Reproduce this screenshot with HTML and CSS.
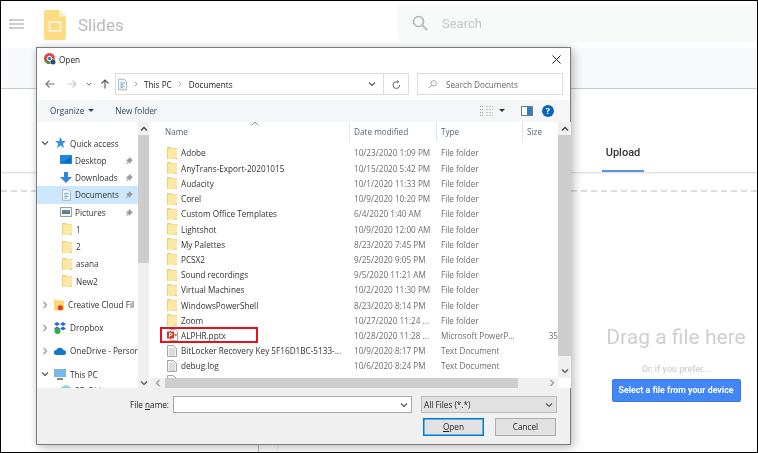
FILE: index.html
```html
<!DOCTYPE html>
<html lang="en">
<head>
<meta charset="utf-8">
<title>Slides - Open</title>
<link rel="stylesheet" href="styles.css">
</head>
<body>
<svg class="defs" width="0" height="0" aria-hidden="true">
  <symbol id="folder" viewBox="0 0 10 12">
    <path d="M0 0h4l1 1h5v11H0z" fill="#f3cf72"/>
    <path d="M1 1.500h9V12H1z" fill="#fce8a6"/>
    <path d="M8 10.500h2V12H8z" fill="#f3cf72"/>
  </symbol>
  <symbol id="doc" viewBox="0 0 10 12">
    <path d="M.5.5h6l3 3v8h-9z" fill="#f4f4f4" stroke="#a8a8a8"/>
    <path d="M2 4h6M2 6h6M2 8h6M2 10h6" stroke="#c4c4c4"/>
  </symbol>
  <symbol id="chev" viewBox="0 0 8 8"><path d="M2.500 1l3 3-3 3" fill="none" stroke="#9a9a9a" stroke-width="1.200"/></symbol>
  <symbol id="chevd" viewBox="0 0 8 8"><path d="M1 2.500l3 3 3-3" fill="none" stroke="#555" stroke-width="1.200"/></symbol>
  <symbol id="chevu" viewBox="0 0 8 8"><path d="M1 5.500l3-3 3 3" fill="none" stroke="#444" stroke-width="1.300"/></symbol>
  <symbol id="pin" viewBox="0 0 8 8"><path d="M4.500 0L8 3.500 6.800 4 5.500 5.400 5 7 1 3l1.600-.6L4 1.200z M2.300 4.800L.5 7.500l2.700-1.800z" fill="#9b9b9b"/></symbol>
  <symbol id="docs" viewBox="0 0 11 14">
    <path d="M.5.5h7l3 3v10H.5z" fill="#f3f5f7" stroke="#9fa6ad"/>
    <path d="M3 5h5M3 7h3M3 9h5M3 11h3" stroke="#4f9fd8"/>
  </symbol>
</svg>

<div class="page">
  <header class="topbar">
    <svg class="hamburger" viewBox="0 0 15 10" width="15" height="10"><path d="M0 1h15M0 5h15M0 9h15" stroke="#bdbdbd" stroke-width="1.300"/></svg>
    <svg class="slides-logo" viewBox="0 0 22 30" width="22" height="30">
      <path d="M2 0h13l7 7v21a2 2 0 0 1-2 2H2a2 2 0 0 1-2-2V2a2 2 0 0 1 2-2z" fill="#fbdc84"/>
      <path d="M15 0l7 7h-7z" fill="#fdeebf"/>
      <path d="M5.500 12h11v9h-11z" fill="none" stroke="#fff2cf" stroke-width="1.800"/>
    </svg>
    <span class="product">Slides</span>
    <div class="searchbox">
      <svg viewBox="0 0 16 16" width="16" height="16"><circle cx="6.500" cy="6.500" r="5" fill="none" stroke="#b5b5b5" stroke-width="1.600"/><path d="M10.200 10.200l5 5" stroke="#b5b5b5" stroke-width="1.800"/></svg>
      <span>Search</span>
    </div>
  </header>
  <div class="band"></div>
  <main class="panel">
    <div class="tabs"><div class="tab">Upload</div></div>
    <div class="dropzone">
      <div class="drag">Drag a file here</div>
      <div class="prefer">Or, if you prefer...</div>
      <div class="select-btn">Select a file from your device</div>
    </div>
  </main>
  <div class="footlines"></div>

  <section class="dialog">
    <div class="titlebar">
      <svg class="chrome" viewBox="0 0 12 12" width="12" height="12">
        <circle cx="5.500" cy="5.500" r="5.500" fill="#d9473c"/>
        <path d="M5.500 5.500L1 8.500A5.500 5.500 0 0 0 6 11z" fill="#3a9b4f"/>
        <path d="M5.500 5.500L11 5.500A5.500 5.500 0 0 1 6 11z" fill="#f2c230"/>
        <circle cx="5.500" cy="5.500" r="2.300" fill="#4a80d8" stroke="#fff"/>
        <circle cx="9" cy="9" r="2.500" fill="#2b4f80"/>
      </svg>
      <span class="title">Open</span>
      <svg class="close" viewBox="0 0 9 9" width="9" height="9"><path d="M.5.500l8 8M8.500.500l-8 8" stroke="#222" stroke-width="1"/></svg>
    </div>

    <div class="navbar">
      <svg class="nav-ico n-back" viewBox="0 0 10 10" width="10" height="10"><path d="M9.500 5H1M4.500 1.500L1 5l3.500 3.500" fill="none" stroke="#777" stroke-width="1.100"/></svg>
      <svg class="nav-ico n-fwd" viewBox="0 0 10 10" width="10" height="10"><path d="M.5 5H9M5.500 1.500L9 5 5.500 8.500" fill="none" stroke="#ccc" stroke-width="1.100"/></svg>
      <svg class="nav-ico n-drop" viewBox="0 0 8 8" width="6" height="6"><use href="#chevd"/></svg>
      <svg class="nav-ico n-up" viewBox="0 0 10 10" width="10" height="10"><path d="M5 9.500V1M1.500 4.500L5 1l3.500 3.500" fill="none" stroke="#555" stroke-width="1.100"/></svg>
      <div class="address">
        <svg class="addr-doc" width="9" height="13"><use href="#docs"/></svg>
        <svg class="crumb-sep" width="6" height="6"><use href="#chev"/></svg>
        <span class="crumb">This PC</span>
        <svg class="crumb-sep" width="6" height="6"><use href="#chev"/></svg>
        <span class="crumb">Documents</span>
        <svg class="addr-drop" width="8" height="8"><use href="#chevd"/></svg>
        <div class="refresh"><svg viewBox="0 0 10 10" width="9" height="9"><path d="M8.500 5.500A3.700 3.700 0 1 1 5 2h2M5.500.5L7.300 2 5.500 3.500" fill="none" stroke="#555" stroke-width="1"/></svg></div>
      </div>
      <div class="search-docs">
        <svg viewBox="0 0 10 10" width="9" height="9"><circle cx="6.300" cy="3.700" r="3" fill="none" stroke="#999"/><path d="M4 6L.8 9.200" stroke="#999"/></svg>
        <span>Search Documents</span>
      </div>
    </div>

    <div class="toolbar">
      <span class="tool">Organize</span><span class="caret"></span>
      <span class="tool newfolder">New folder</span>
      <svg class="views" viewBox="0 0 13 10" width="13" height="10"><path d="M0 .5h4M0 3.500h4M0 6.500h4M0 9.500h4" stroke="#9a9a9a" stroke-dasharray="1 1"/><path d="M6 .5h7M6 3.500h7M6 6.500h7M6 9.500h7" stroke="#c2c2c2" stroke-dasharray="2 1"/></svg>
      <span class="caret dark"></span>
      <svg class="preview" viewBox="0 0 12 10" width="12" height="10"><rect x=".5" y=".5" width="11" height="9" fill="#fff" stroke="#6d7d8c"/><rect x="6" y="1" width="5" height="8" fill="#2d7cc4"/></svg>
      <span class="help">?</span>
    </div>

    <div class="panes">
      <nav class="tree">
        <div class="tree-list">
          <div class="t-row l1"><svg class="arrow" width="8" height="8"><use href="#chevd"/></svg><svg class="ti" viewBox="0 0 12 12" width="12" height="12"><path d="M6.500 0l1.600 4H12L8.800 6.800 10 11 6.500 8.500 3 11l1.200-4.200L1 4h4z" fill="#3b8fe0"/></svg><span>Quick access</span></div>
          <div class="t-row l2"><svg class="ti wide" viewBox="0 0 12 10" width="12" height="10"><rect width="12" height="9" fill="#1f86d8"/><path d="M1 8l10-6v6z" fill="#0d6fc0"/></svg><span>Desktop</span><svg class="pin" width="8" height="8"><use href="#pin"/></svg></div>
          <div class="t-row l2"><svg class="ti wide" viewBox="0 0 12 11" width="12" height="11"><path d="M4 0h4v5h4L6 11 0 5h4z" fill="#2f86dd"/></svg><span>Downloads</span><svg class="pin" width="8" height="8"><use href="#pin"/></svg></div>
          <div class="t-row l2 sel"><svg class="ti wide docs" width="9" height="12"><use href="#docs"/></svg><span>Documents</span><svg class="pin" width="8" height="8"><use href="#pin"/></svg></div>
          <div class="t-row l2"><svg class="ti wide" viewBox="0 0 12 10" width="12" height="10"><rect x=".5" y=".5" width="11" height="9" fill="#f2f4f6" stroke="#99a0a8"/><path d="M2 3h8v2H2z" fill="#5b87b5"/><path d="M2 5h8v2H2z" fill="#6a7c5a"/></svg><span>Pictures</span><svg class="pin" width="8" height="8"><use href="#pin"/></svg></div>
          <div class="t-row l2"><svg class="ti fold" width="10" height="12"><use href="#folder"/></svg><span>1</span></div>
          <div class="t-row l2"><svg class="ti fold" width="10" height="12"><use href="#folder"/></svg><span>2</span></div>
          <div class="t-row l2"><svg class="ti fold" width="10" height="12"><use href="#folder"/></svg><span>asana</span></div>
          <div class="t-row l2"><svg class="ti fold" width="10" height="12"><use href="#folder"/></svg><span>New2</span></div>
          <div class="t-row l1 gap"><svg class="arrow" width="8" height="8"><use href="#chev"/></svg><svg class="ti" viewBox="0 0 11 12" width="10" height="12"><path d="M0 0h3l1 1h7v11H0z" fill="#fbd873"/><circle cx="7" cy="9" r="2.800" fill="#dd3a2a"/></svg><span>Creative Cloud Fil</span></div>
          <div class="t-row l1 gap2"><svg class="arrow" width="8" height="8"><use href="#chev"/></svg><svg class="ti" viewBox="0 0 12 12" width="12" height="12"><path d="M3 0l3 2-3 2-3-2zM9 0l3 2-3 2-3-2zM3 4.500l3 2-3 2-3-2zM9 4.500l3 2-3 2-3-2z" fill="#2a66d8"/><circle cx="3.500" cy="9" r="3" fill="#38a64a"/></svg><span>Dropbox</span></div>
          <div class="t-row l1 gap2"><svg class="arrow" width="8" height="8"><use href="#chev"/></svg><svg class="ti" viewBox="0 0 12 8" width="12" height="8"><path d="M2.500 8a2.500 2.500 0 0 1-.3-5A4 4 0 0 1 9.500 3 2.500 2.500 0 0 1 9.500 8z" fill="#1478c8"/></svg><span>OneDrive - Persor</span></div>
          <div class="t-row l1 gap2"><svg class="arrow" width="8" height="8"><use href="#chevd"/></svg><svg class="ti" viewBox="0 0 12 11" width="12" height="11"><rect width="12" height="8" fill="#75b9e8"/><path d="M3 10h6" stroke="#7a8894" stroke-width="2"/></svg><span>This PC</span></div>
          <div class="t-row l2 tail"><svg class="ti wide" viewBox="0 0 12 10" width="12" height="10"><path d="M6 0l6 3v6H0V3z" fill="#7fd0e8"/></svg><span>3D Objects</span></div>
        </div>
        <div class="vscroll tree-scroll">
          <svg width="8" height="8"><use href="#chevu"/></svg>
          <div class="thumb"></div>
          <svg class="down" width="8" height="8"><use href="#chevd"/></svg>
        </div>
      </nav>

      <div class="files">
        <div class="filearea">
          <div class="columns">
            <div class="head h-name"><svg class="sort" width="8" height="5" viewBox="0 0 8 5"><path d="M.5 4.500L4 1l3.500 3.500" fill="none" stroke="#999"/></svg>Name</div>
            <div class="head">Date modified</div>
            <div class="head">Type</div>
            <div class="head">Size</div>
          </div>
          <div class="rows">
            <div class="row"><svg class="ficon" width="10" height="12"><use href="#folder"/></svg><span class="name">Adobe</span><span class="meta">10/23/2020 1:09 PM</span><span class="meta">File folder</span><span class="meta"></span></div>
            <div class="row"><svg class="ficon" width="10" height="12"><use href="#folder"/></svg><span class="name">AnyTrans-Export-20201015</span><span class="meta">10/15/2020 5:42 PM</span><span class="meta">File folder</span><span class="meta"></span></div>
            <div class="row"><svg class="ficon" width="10" height="12"><use href="#folder"/></svg><span class="name">Audacity</span><span class="meta">10/1/2020 11:33 PM</span><span class="meta">File folder</span><span class="meta"></span></div>
            <div class="row"><svg class="ficon" width="10" height="12"><use href="#folder"/></svg><span class="name">Corel</span><span class="meta">10/9/2020 10:20 PM</span><span class="meta">File folder</span><span class="meta"></span></div>
            <div class="row"><svg class="ficon" width="10" height="12"><use href="#folder"/></svg><span class="name">Custom Office Templates</span><span class="meta">6/4/2020 1:40 AM</span><span class="meta">File folder</span><span class="meta"></span></div>
            <div class="row"><svg class="ficon" width="10" height="12"><use href="#folder"/></svg><span class="name">Lightshot</span><span class="meta">10/9/2020 12:00 AM</span><span class="meta">File folder</span><span class="meta"></span></div>
            <div class="row"><svg class="ficon" width="10" height="12"><use href="#folder"/></svg><span class="name">My Palettes</span><span class="meta">8/23/2020 7:45 PM</span><span class="meta">File folder</span><span class="meta"></span></div>
            <div class="row"><svg class="ficon" width="10" height="12"><use href="#folder"/></svg><span class="name">PCSX2</span><span class="meta">9/25/2020 9:05 PM</span><span class="meta">File folder</span><span class="meta"></span></div>
            <div class="row"><svg class="ficon" width="10" height="12"><use href="#folder"/></svg><span class="name">Sound recordings</span><span class="meta">9/5/2020 11:21 AM</span><span class="meta">File folder</span><span class="meta"></span></div>
            <div class="row"><svg class="ficon" width="10" height="12"><use href="#folder"/></svg><span class="name">Virtual Machines</span><span class="meta">10/2/2020 11:30 PM</span><span class="meta">File folder</span><span class="meta"></span></div>
            <div class="row"><svg class="ficon" width="10" height="12"><use href="#folder"/></svg><span class="name">WindowsPowerShell</span><span class="meta">8/23/2020 8:14 PM</span><span class="meta">File folder</span><span class="meta"></span></div>
            <div class="row"><svg class="ficon" width="10" height="12"><use href="#folder"/></svg><span class="name">Zoom</span><span class="meta">10/27/2020 11:24 ...</span><span class="meta">File folder</span><span class="meta"></span></div>
            <div class="row"><svg class="ficon" viewBox="0 0 11 12" width="11" height="12"><path d="M3.500.5h5l2 2v9h-7z" fill="#fff" stroke="#aaa"/><rect x="0" y="2.500" width="7" height="7" fill="#c8412b"/><path d="M2.500 8V4.200h1.300a1.100 1.100 0 0 1 0 2.300H2.500" fill="none" stroke="#fff"/><circle cx="8.500" cy="6" r="1.400" fill="#e07a5f"/></svg><span class="name">ALPHR.pptx</span><span class="meta">10/28/2020 11:28 ...</span><span class="meta">Microsoft PowerP...</span><span class="meta size">35</span></div>
            <div class="row"><svg class="ficon" width="10" height="12"><use href="#doc"/></svg><span class="name">BitLocker Recovery Key 5F16D1BC-5133-...</span><span class="meta">10/9/2020 8:17 PM</span><span class="meta">Text Document</span><span class="meta"></span></div>
            <div class="row"><svg class="ficon" width="10" height="12"><use href="#doc"/></svg><span class="name">debug.log</span><span class="meta">10/6/2020 8:24 PM</span><span class="meta">Text Document</span><span class="meta"></span></div>
            <div class="row"><svg class="ficon" width="10" height="12"><use href="#doc"/></svg></div>
          </div>
          <div class="redbox"></div>
          <div class="hscroll">
            <svg class="hl" width="8" height="8"><use href="#chev"/></svg>
            <div class="hthumb"></div>
            <svg class="hr" width="8" height="8"><use href="#chev"/></svg>
          </div>
        </div>
        <div class="vscroll file-scroll">
          <svg width="8" height="8"><use href="#chevu"/></svg>
          <div class="thumb"></div>
          <svg class="down" width="8" height="8"><use href="#chevd"/></svg>
          <div class="corner"></div>
        </div>
      </div>
    </div>

    <div class="bottom">
      <div class="name-line">
        <label class="fn-label">File <u>n</u>ame:</label>
        <div class="fn-input"><svg width="8" height="8"><use href="#chevd"/></svg></div>
        <div class="filter">All Files (*.*)<svg width="8" height="8"><use href="#chevd"/></svg></div>
      </div>
      <div class="btn-line">
        <div class="btn primary"><u>O</u>pen</div>
        <div class="btn">Cancel</div>
      </div>
    </div>
  </section>
</div>
</body>
</html>
```

FILE: styles.css
```css
* { box-sizing: border-box; }
html, body { margin: 0; padding: 0; }
body { width: 758px; height: 453px; overflow: hidden; background: #000; font-family: "Open Sans", "Noto Sans", sans-serif; }
.defs { position: absolute; }
.page { position: relative; width: 756px; height: 451px; margin: 1px 0 0 1px; background: #fff; overflow: hidden; display: flex; flex-direction: column; filter: blur(.25px); }

.topbar { height: 47px; flex: none; display: flex; align-items: center; background: #fff; }
.hamburger { margin: 0 0 1px 8px; flex: none; }
.slides-logo { margin: 0 0 0 20px; flex: none; }
.product { margin-left: 12px; font: 17px Roboto, sans-serif; color: #b9b9b9; }
.searchbox { margin: 0 0 6px auto; width: 360px; height: 38px; align-self: flex-end; background: #f8f9f9; border-radius: 6px 0 0 6px; display: flex; align-items: center; padding-left: 15px; gap: 14px; font: 13px Roboto, sans-serif; color: #c6c6c6; }

.band { height: 41px; flex: none; background: #f8f9fa; border-bottom: 1px solid #c8c8c8; }
.panel { flex: 1; background: #fff; display: flex; flex-direction: column; }
.tabs { height: 84px; flex: none; border-bottom: 1px solid #e2e2e2; display: flex; align-items: flex-end; padding-left: 601px; box-shadow: 0 1px 2px rgba(0,0,0,.05); }
.tab { width: 42px; height: 44px; text-align: center; padding-top: 18px; font: 500 11px Roboto, sans-serif; color: #333; border-bottom: 2px solid #5a90e6; }
.dropzone { flex: 1; margin-top: 17px; border-top: 2px dashed #dcdcdc; display: flex; flex-direction: column; align-items: center; padding: 131px 0 0 594px; }
.drag { font: 21px/28px Roboto, sans-serif; color: #cfcfcf; white-space: nowrap; }
.prefer { margin-top: 11px; font: 500 9px/14px Roboto, sans-serif; color: #d0d0d0; }
.select-btn { margin-top: 3px; width: 129px; height: 23px; background: #4285f4; border: 1px solid #3b78e0; border-radius: 2px; color: #fff; font: 700 8.800px/21px Roboto, sans-serif; text-align: center; white-space: nowrap; }
.footlines { position: absolute; left: 257px; bottom: 0; width: 20px; height: 8px; border-left: 1px solid #bbb; border-right: 1px dotted #ddd; }

.dialog { position: absolute; left: 35px; top: 46px; width: 535px; height: 398px; background: #fff; border: 1px solid #7c7c7c; border-right-width: 1.500px; box-shadow: 3px 3px 10px rgba(0,0,0,.22), 0 0 6px rgba(0,0,0,.1); display: flex; flex-direction: column; color: #333; font-size: 8.200px; }
.titlebar { height: 22px; flex: none; display: flex; align-items: center; padding: 0 7px; }
.chrome { flex: none; }
.title { margin-left: 3px; color: #222; }
.close { margin-left: auto; margin-right: 2px; }

.navbar { height: 30px; flex: none; display: flex; align-items: center; padding: 3px 0 5px; }
.nav-ico { flex: none; }
.n-back { margin-left: 8px; }
.n-fwd { margin-left: 12px; }
.n-drop { margin-left: 9px; }
.n-up { margin-left: 8px; }
.address { margin-left: 5px; width: 294px; height: 22px; border: 1px solid #dcdcdc; display: flex; align-items: center; padding-left: 2px; color: #222; }
.addr-doc { flex: none; }
.crumb-sep { margin: 0 5.500px; flex: none; }
.addr-drop { margin-left: auto; margin-right: 7px; }
.crumb { white-space: nowrap; }
.refresh { width: 25px; height: 100%; border-left: 1px solid #dcdcdc; display: flex; align-items: center; justify-content: center; }
.search-docs { margin-left: 8px; width: 146px; height: 22px; border: 1px solid #dcdcdc; display: flex; align-items: center; padding-left: 10px; gap: 9px; color: #666; }

.toolbar { height: 22px; flex: none; background: #f5f6f7; display: flex; align-items: center; padding: 0 16px 1px 13px; color: #2c4a66; }
.tool { white-space: nowrap; }
.caret { width: 0; height: 0; border: 3px solid transparent; border-top: 3.500px solid #2c4a66; border-bottom: 0; margin-left: 4px; }
.caret.dark { margin-left: 6px; border-top-color: #333; }
.newfolder { margin-left: 21px; }
.views { margin-left: auto; }
.preview { margin-left: 16px; }
.help { margin-left: 9px; width: 12px; height: 12px; border-radius: 50%; background: #0a64b8; color: #fff; font-weight: 700; font-size: 9px; line-height: 12px; text-align: center; }

.panes { height: 266px; flex: none; display: flex; background: #fff; }
.tree { width: 113px; flex: none; display: flex; }
.tree-list { width: 101px; flex: none; padding-top: 12.500px; overflow: hidden; }
.t-row { height: 17.250px; display: flex; align-items: center; white-space: nowrap; position: relative; overflow: hidden; color: #333; }
.t-row span { flex: none; }
.l1 { padding-left: 4px; }
.l2 { padding-left: 23px; }
.l1 .arrow { width: 8px; flex: none; }
.l1 .ti { margin-left: 5px; margin-right: 4px; flex: none; }
.l2 .ti { margin-right: 3px; flex: none; }
.l2 .ti.fold { margin-left: 2px; margin-right: 4px; }
.l2 .ti.docs { margin-left: 2px; margin-right: 4px; }
.sel { background: #cce8ff; }
.pin { position: absolute; right: 5px; top: 5px; }
.gap { margin-top: 6.500px; }
.gap2 { margin-top: 5.800px; }
.tail { margin-top: -1px; }

.vscroll { background: #f0f0f0; display: flex; flex-direction: column; align-items: center; padding-top: 3px; }
.vscroll > svg { flex: none; }
.tree-scroll { width: 11px; }
.tree-scroll .thumb { width: 100%; height: 128px; margin-top: 2px; background: #cdcdcd; }
.tree-scroll .down { margin-top: auto; margin-bottom: 1px; }

.files { flex: 1; display: flex; min-width: 0; }
.filearea { width: 408px; flex: none; position: relative; display: flex; flex-direction: column; }
.columns { height: 23px; flex: none; display: grid; grid-template-columns: 200px 87px 86px 35px; }
.head { position: relative; height: 20px; border-right: 1px solid #e5e5e5; padding: 4px 0 0 4px; white-space: nowrap; overflow: hidden; color: #55677b; }
.h-name { padding-left: 15px; overflow: visible; }
.head:last-child { border-right: 0; }
.sort { position: absolute; left: 101px; top: -1px; }
.rows { flex: 1; overflow: hidden; padding-top: 0.400px; }
.row { height: 15.210px; display: grid; grid-template-columns: 14px 173px 87px 87px 30px; align-items: center; padding-left: 17px; white-space: nowrap; }
.ficon { display: block; }
.name { color: #333; overflow: hidden; }
.meta { color: #6d6d6d; overflow: hidden; }
.size { text-align: right; }
.redbox { position: absolute; left: 10px; top: 205px; width: 98px; height: 16px; border: 2px solid #e8101c; pointer-events: none; }
.hscroll { height: 10px; flex: none; background: #f0f0f0; display: flex; align-items: center; position: relative; }
.hl { transform: rotate(180deg); margin-left: 4px; flex: none; }
.hthumb { margin-left: 3px; width: 353px; height: 100%; background: #cdcdcd; }
.hr { margin-left: auto; margin-right: 2px; flex: none; }
.file-scroll { width: 13px; flex: none; }
.file-scroll .thumb { width: 100%; height: 221px; margin-top: 2px; background: #cdcdcd; }
.file-scroll .down { margin-top: 11px; }
.corner { margin-top: auto; width: 100%; height: 10px; background: #fff; }

.bottom { flex: 1; background: #f0f0f0; display: flex; flex-direction: column; padding: 8px 13px 0 0; position: relative; }
.name-line { height: 17px; display: flex; align-items: center; justify-content: flex-end; color: #222; }
.fn-label { margin-right: 4px; white-space: nowrap; }
.fn-input { width: 239px; height: 17px; background: #fff; border: 1px solid #a8a8a8; display: flex; align-items: center; justify-content: flex-end; padding-right: 3px; }
.filter { margin-left: 9px; width: 136px; height: 17px; background: #e1e1e1; border: 1px solid #bcbcbc; display: flex; align-items: center; justify-content: space-between; padding: 0 3px 0 2px; }
.btn-line { margin-top: 5px; display: flex; justify-content: flex-end; gap: 11px; padding-right: 1px; }
.btn { width: 61px; height: 18px; background: #e1e1e1; border: 1px solid #adadad; text-align: center; line-height: 15px; color: #222; }
.primary { border: 1px solid #0078d7; box-shadow: inset 0 0 0 .5px #0078d7; }
```
